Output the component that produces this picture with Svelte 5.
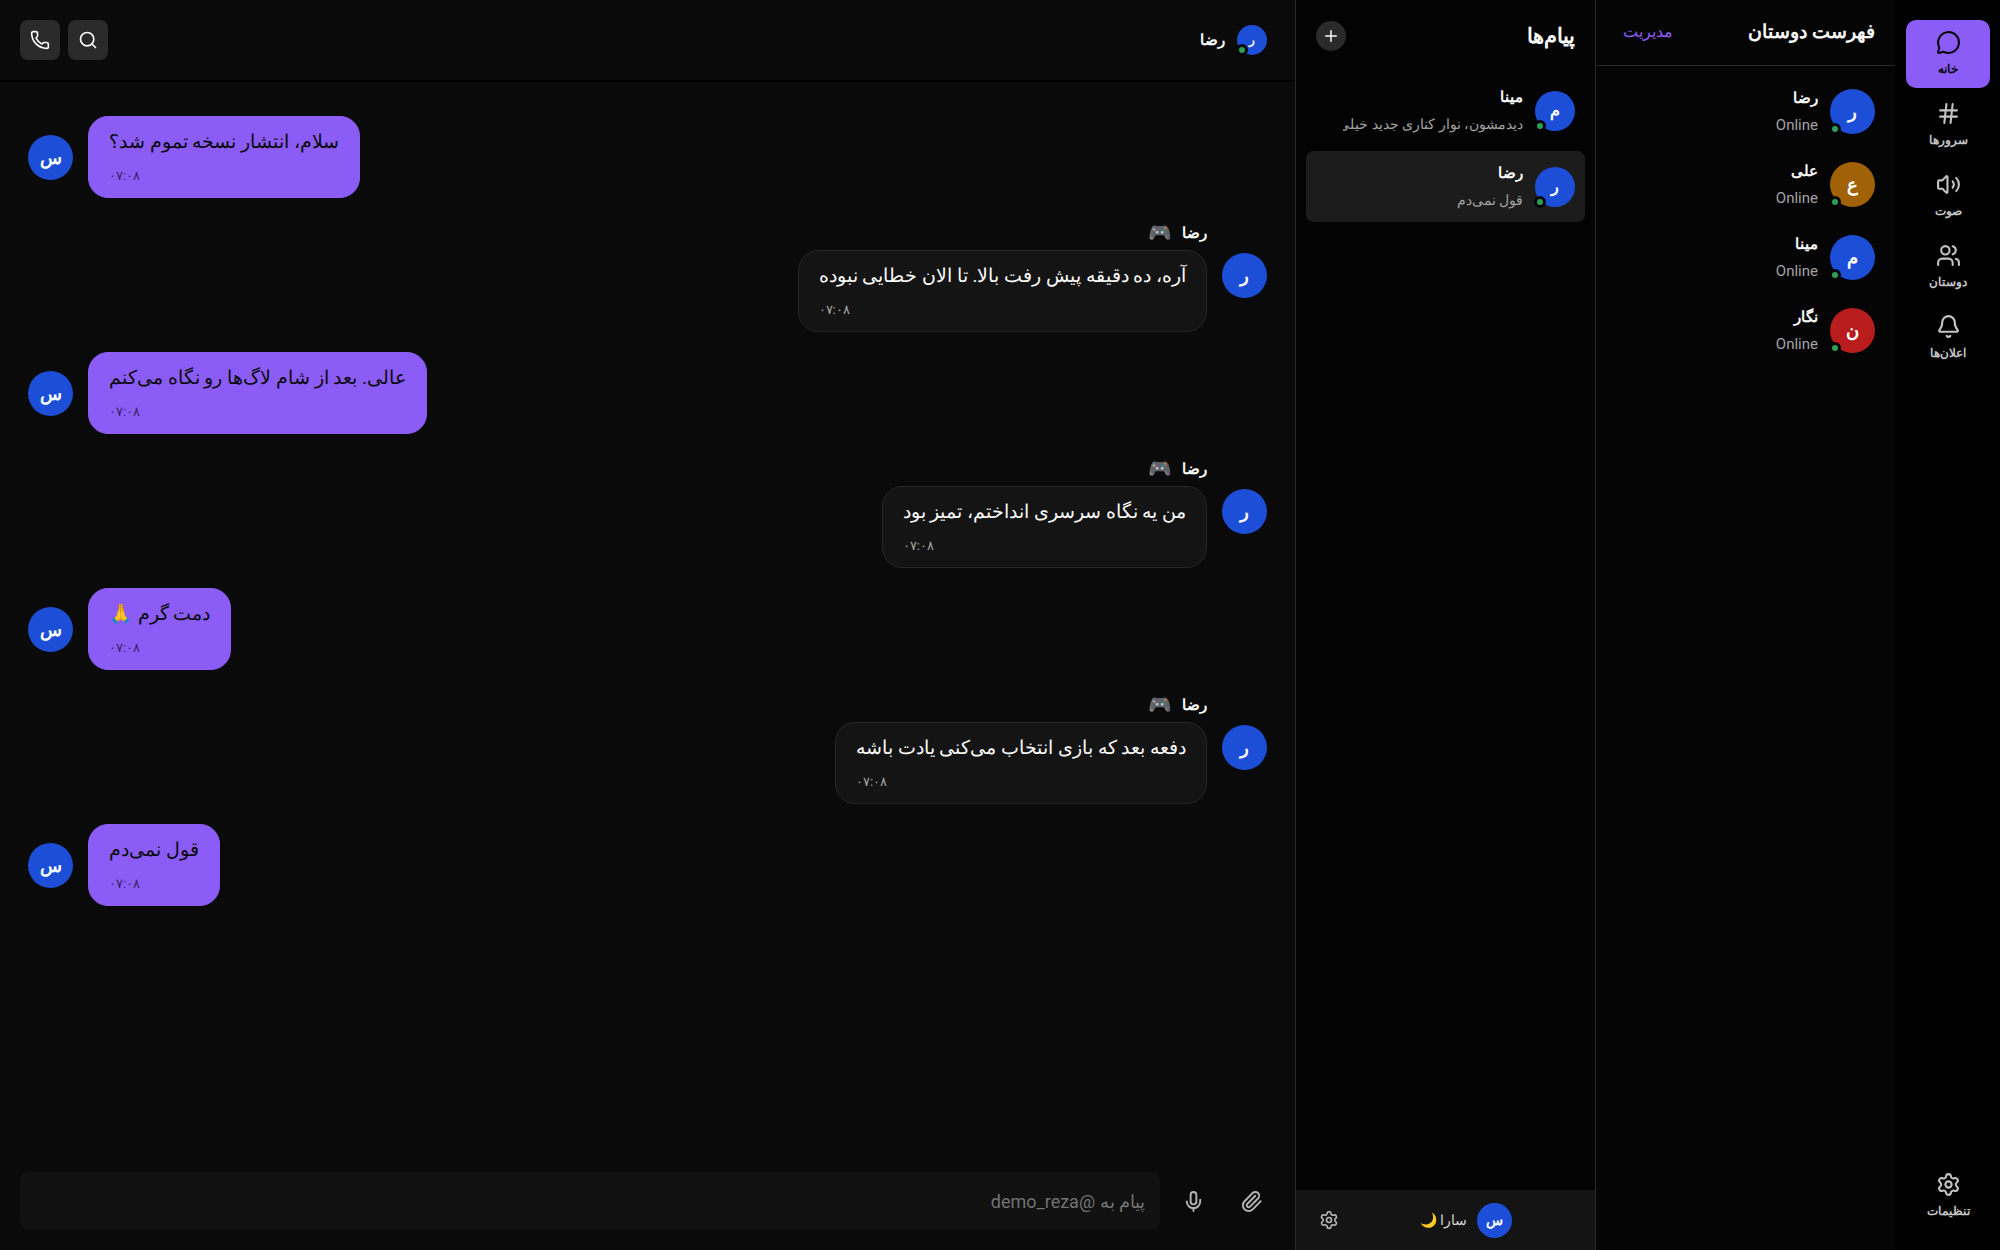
<script lang="ts">
  type Person = { name: string; letter: string; color: string };
  type Message = { text: string; mine: boolean };

  const blue = "#1d4ed8";
  const time = "۰۷:۰۸";

  const icons: Record<string, string[]> = {
    chat: [
      "M2.992 16.342a2 2 0 0 1 .094 1.167l-1.065 3.29a1 1 0 0 0 1.236 1.168l3.413-.998a2 2 0 0 1 1.099.092 10 10 0 1 0-4.777-4.719",
    ],
    hash: ["M4 9h16", "M4 15h16", "M10 3 8 21", "M16 3l-2 18"],
    volume: [
      "M11 4.702a.705.705 0 0 0-1.203-.498L6.413 7.587A1.4 1.4 0 0 1 5.416 8H3a1 1 0 0 0-1 1v6a1 1 0 0 0 1 1h2.416a1.4 1.4 0 0 1 .997.413l3.383 3.384A.705.705 0 0 0 11 19.298z",
      "M16 9a5 5 0 0 1 0 6",
      "M19.364 18.364a9 9 0 0 0 0-12.728",
    ],
    users: [
      "M16 21v-2a4 4 0 0 0-4-4H6a4 4 0 0 0-4 4v2",
      "M5 7a4 4 0 1 0 8 0a4 4 0 1 0-8 0",
      "M16 3.128a4 4 0 0 1 0 7.744",
      "M22 21v-2a4 4 0 0 0-3-3.87",
    ],
    bell: [
      "M10.268 21a2 2 0 0 0 3.464 0",
      "M3.262 15.326A1 1 0 0 0 4 17h16a1 1 0 0 0 .74-1.673C19.41 13.956 18 12.499 18 8A6 6 0 0 0 6 8c0 4.499-1.411 5.956-2.738 7.326",
    ],
    settings: [
      "M9.671 4.136a2.34 2.34 0 0 1 4.659 0 2.34 2.34 0 0 0 3.319 1.915 2.34 2.34 0 0 1 2.33 4.033 2.34 2.34 0 0 0 0 3.831 2.34 2.34 0 0 1-2.33 4.033 2.34 2.34 0 0 0-3.319 1.915 2.34 2.34 0 0 1-4.659 0 2.34 2.34 0 0 0-3.32-1.915 2.34 2.34 0 0 1-2.33-4.033 2.34 2.34 0 0 0 0-3.831A2.34 2.34 0 0 1 6.35 6.051a2.34 2.34 0 0 0 3.319-1.915",
      "M9 12a3 3 0 1 0 6 0a3 3 0 1 0-6 0",
    ],
    phone: [
      "M13.832 16.568a1 1 0 0 0 1.213-.303l.355-.465A2 2 0 0 1 17 15h3a2 2 0 0 1 2 2v3a2 2 0 0 1-2 2A18 18 0 0 1 2 4a2 2 0 0 1 2-2h3a2 2 0 0 1 2 2v3a2 2 0 0 1-.8 1.6l-.468.351a1 1 0 0 0-.292 1.233 14 14 0 0 0 6.392 6.384",
    ],
    search: ["M3 11a8 8 0 1 0 16 0a8 8 0 1 0-16 0", "m21 21-4.34-4.34"],
    plus: ["M5 12h14", "M12 5v14"],
    mic: [
      "M12 19v3",
      "M19 10v2a7 7 0 0 1-14 0",
      "M12 2a3 3 0 0 1 3 3v7a3 3 0 0 1-6 0V5a3 3 0 0 1 3-3z",
    ],
    clip: [
      "m16 6-8.414 8.586a2 2 0 0 0 2.829 2.829l8.414-8.586a4 4 0 1 0-5.657-5.657l-8.379 8.551a6 6 0 1 0 8.485 8.485l8.379-8.551",
    ],
  };

  const nav = [
    { icon: "chat", label: "خانه" },
    { icon: "hash", label: "سرورها" },
    { icon: "volume", label: "صوت" },
    { icon: "users", label: "دوستان" },
    { icon: "bell", label: "اعلان‌ها" },
  ];

  const reza: Person = { name: "رضا", letter: "ر", color: blue };
  const mina: Person = { name: "مینا", letter: "م", color: blue };
  const sara: Person = { name: "سارا", letter: "س", color: blue };

  const friends: Person[] = [
    reza,
    { name: "علی", letter: "ع", color: "#a16207" },
    mina,
    { name: "نگار", letter: "ن", color: "#b91c1c" },
  ];

  const chats = [
    { person: mina, preview: "دیدمشون، نوار کناری جدید خیلی" },
    { person: reza, preview: "قول نمی‌دم" },
  ];

  const messages: Message[] = [
    { text: "سلام، انتشار نسخه تموم شد؟", mine: true },
    { text: "آره، ده دقیقه پیش رفت بالا. تا الان خطایی نبوده", mine: false },
    { text: "عالی. بعد از شام لاگ‌ها رو نگاه می‌کنم", mine: true },
    { text: "من یه نگاه سرسری انداختم، تمیز بود", mine: false },
    { text: "دمت گرم 🙏", mine: true },
    { text: "دفعه بعد که بازی انتخاب می‌کنی یادت باشه", mine: false },
    { text: "قول نمی‌دم", mine: true },
  ];

  let page = $state("chat");
  let active = $state("رضا");
  let draft = $state("");
</script>

{#snippet icon(name: string, size: number)}
  <svg
    width={size}
    height={size}
    viewBox="0 0 24 24"
    fill="none"
    stroke="currentColor"
    stroke-width="2"
    stroke-linecap="round"
    stroke-linejoin="round"
    aria-hidden="true"
  >
    {#each icons[name] as d}
      <path {d} />
    {/each}
  </svg>
{/snippet}

{#snippet avatar(person: Person, size: string, online: boolean)}
  <span class="avatar {size}" style="background-color: {person.color}">
    {person.letter}
    {#if online}
      <span class="dot"></span>
    {/if}
  </span>
{/snippet}

<div class="app" dir="rtl" lang="fa">
  <nav class="rail">
    {#each nav as item}
      <button
        class="nav-item"
        class:selected={page === item.icon}
        onclick={() => (page = item.icon)}
      >
        {@render icon(item.icon, 25)}
        <span>{item.label}</span>
      </button>
    {/each}
    <button class="nav-item last">
      {@render icon("settings", 25)}
      <span>تنظیمات</span>
    </button>
  </nav>

  <aside class="friends">
    <header>
      <h2>فهرست دوستان</h2>
      <a href="#manage">مدیریت</a>
    </header>
    <ul>
      {#each friends as friend}
        <li>
          {@render avatar(friend, "large", true)}
          <div class="lines">
            <strong>{friend.name}</strong>
            <span>Online</span>
          </div>
        </li>
      {/each}
    </ul>
  </aside>

  <aside class="chats">
    <header>
      <h2>پیام‌ها</h2>
      <button class="add" aria-label="پیام جدید">{@render icon("plus", 18)}</button>
    </header>
    <div class="chat-list">
      {#each chats as chat}
        <button
          class="chat"
          class:selected={active === chat.person.name}
          onclick={() => (active = chat.person.name)}
        >
          {@render avatar(chat.person, "medium", true)}
          <span class="lines">
            <strong>{chat.person.name}</strong>
            <span class="preview">{chat.preview}</span>
          </span>
        </button>
      {/each}
    </div>
    <footer>
      {@render avatar(sara, "small", false)}
      <span class="me">سارا 🌙</span>
      <button class="plain" aria-label="تنظیمات">{@render icon("settings", 20)}</button>
    </footer>
  </aside>

  <main>
    <header>
      {@render avatar(reza, "tiny", true)}
      <h1>رضا</h1>
      <div class="actions">
        <button aria-label="جستجو">{@render icon("search", 20)}</button>
        <button aria-label="تماس">{@render icon("phone", 20)}</button>
      </div>
    </header>

    <div class="messages">
      {#each messages as message}
        <div class="message" class:mine={message.mine}>
          {@render avatar(message.mine ? sara : reza, "large", false)}
          <div class="body">
            {#if !message.mine}
              <div class="author"><strong>رضا</strong><span>🎮</span></div>
            {/if}
            <div class="bubble">
              <p>{message.text}</p>
              <time>{time}</time>
            </div>
          </div>
        </div>
      {/each}
    </div>

    <form class="composer" onsubmit={(e) => e.preventDefault()}>
      <div class="tools">
        <button type="button" class="plain" aria-label="پیوست">{@render icon("clip", 23)}</button>
        <button type="button" class="plain" aria-label="ضبط صدا">{@render icon("mic", 23)}</button>
      </div>
      <input
        type="text"
        bind:value={draft}
        placeholder="پیام به @demo_reza"
        aria-label="متن پیام"
      />
    </form>
  </main>
</div>

<style>
  :global(body) {
    background-color: #000;
  }
  .app {
    display: grid;
    grid-template-columns: 105px 300px 300px minmax(0, 1fr);
    height: 100vh;
    background-color: #0a0a0a;
    color: #fafafa;
    font-family: Roboto, "Noto Sans", sans-serif;
    font-size: 16px;
  }
  .app * {
    box-sizing: border-box;
  }
  h1,
  h2,
  p,
  ul {
    margin: 0;
    padding: 0;
  }
  button,
  input {
    font-family: inherit;
    border: none;
    padding: 0;
    color: inherit;
    background: none;
  }
  button {
    cursor: pointer;
  }
  svg {
    display: block;
    flex: none;
  }

  .rail {
    display: flex;
    flex-direction: column;
    gap: 3px;
    padding: 20px 10px 20px 11px;
    background-color: #000;
  }
  .nav-item {
    display: flex;
    flex-direction: column;
    align-items: center;
    gap: 4px;
    height: 68px;
    padding-top: 10px;
    border-radius: 10px;
    color: #c4c4c4;
    font-size: 12px;
    font-weight: 600;
    line-height: 20px;
  }
  .nav-item.selected {
    background-color: #8b5cf6;
    color: #0a0a0a;
  }
  .nav-item.last {
    margin-top: auto;
  }

  .friends,
  .chats {
    display: flex;
    flex-direction: column;
    min-width: 0;
    background-color: #050505;
    border-left: 1px solid #2a2a2a;
  }
  .chats {
    background-color: #030303;
  }
  h2 {
    font-size: 19px;
    font-weight: 700;
    line-height: 30px;
  }
  .friends header {
    display: flex;
    align-items: center;
    justify-content: space-between;
    height: 66px;
    padding: 0 20px 2px 27px;
    border-bottom: 1px solid #2a2a2a;
  }
  .friends header a {
    color: #8b5cf6;
    font-size: 16px;
    text-decoration: none;
  }
  .friends ul {
    list-style: none;
    padding: 9px 20px;
  }
  .friends li {
    display: flex;
    align-items: center;
    gap: 12px;
    height: 73px;
  }

  .avatar {
    position: relative;
    display: flex;
    flex: none;
    align-items: center;
    justify-content: center;
    border-radius: 50%;
    color: #fff;
    font-weight: 700;
  }
  .avatar.large {
    width: 45px;
    height: 45px;
    font-size: 18px;
  }
  .avatar.medium {
    width: 40px;
    height: 40px;
    font-size: 16px;
  }
  .avatar.small {
    width: 35px;
    height: 35px;
    font-size: 14px;
  }
  .avatar.tiny {
    width: 30px;
    height: 30px;
    font-size: 12px;
  }
  .dot {
    position: absolute;
    left: -1px;
    bottom: -1px;
    width: 12px;
    height: 12px;
    border: 3px solid #050505;
    border-radius: 50%;
    background-color: #2e9e5b;
  }

  .lines {
    display: flex;
    flex: 1;
    flex-direction: column;
    align-items: flex-start;
    min-width: 0;
  }
  .lines strong {
    font-size: 15px;
    font-weight: 700;
    line-height: 27px;
  }
  .lines span {
    color: #a3a3a3;
    font-size: 15px;
    line-height: 27px;
  }

  .chats header {
    display: flex;
    align-items: center;
    justify-content: space-between;
    height: 72px;
    padding: 0 20px;
  }
  .chats h2 {
    font-size: 21px;
  }
  .add {
    display: flex;
    align-items: center;
    justify-content: center;
    width: 30px;
    height: 30px;
    border-radius: 50%;
    background-color: #2a2a2a;
  }
  .chat-list {
    display: flex;
    flex: 1;
    flex-direction: column;
    gap: 5px;
    padding: 3px 10px;
  }
  .chat {
    display: flex;
    align-items: center;
    gap: 12px;
    height: 71px;
    padding: 0 10px;
    border-radius: 8px;
  }
  .chat.selected {
    background-color: #1c1c1c;
  }
  .lines .preview {
    max-width: 180px;
    overflow: hidden;
    font-size: 14px;
    white-space: nowrap;
  }
  .chats footer {
    display: flex;
    align-items: center;
    gap: 10px;
    height: 60px;
    padding: 0 83px 0 23px;
    background-color: #141414;
  }
  .me {
    color: #d4d4d4;
    font-size: 14px;
    font-weight: 500;
  }
  .plain {
    color: #b4b4b4;
  }
  footer .plain {
    margin-right: auto;
  }

  main {
    display: flex;
    flex-direction: column;
    min-width: 0;
  }
  main header {
    display: flex;
    align-items: center;
    gap: 12px;
    height: 82px;
    padding: 0 28px 0 20px;
    border-bottom: 2px solid #000;
  }
  h1 {
    font-size: 15px;
    font-weight: 700;
  }
  .actions {
    display: flex;
    gap: 8px;
    margin-right: auto;
  }
  .actions button {
    display: flex;
    align-items: center;
    justify-content: center;
    width: 40px;
    height: 40px;
    border-radius: 8px;
    background-color: #2a2a2a;
  }

  .messages {
    display: flex;
    flex: 1;
    flex-direction: column;
    gap: 20px;
    min-height: 0;
    padding: 34px 28px 20px;
    overflow: hidden;
  }
  .message {
    display: flex;
    align-items: center;
    gap: 15px;
  }
  .message.mine {
    flex-direction: row-reverse;
  }
  .author {
    display: flex;
    align-items: center;
    gap: 10px;
    height: 32px;
    padding-bottom: 3px;
    font-size: 15px;
  }
  .author span {
    font-size: 19px;
  }
  .bubble {
    height: 82px;
    padding: 9px 20px;
    border: 1px solid #262626;
    border-radius: 20px;
    background-color: #141414;
  }
  .bubble p {
    font-size: 19px;
    line-height: 32px;
  }
  .bubble time {
    display: block;
    color: #a3a3a3;
    font-size: 13px;
    line-height: 36px;
    text-align: left;
  }
  .mine .bubble {
    border-color: #8b5cf6;
    background-color: #8b5cf6;
    color: #0a0a0a;
  }
  .mine time {
    color: #3a2568;
  }

  .composer {
    display: flex;
    align-items: center;
    gap: 22px;
    padding: 20px 32px 20px 20px;
  }
  .tools {
    display: flex;
    gap: 35px;
  }
  .composer input {
    flex: 1;
    min-width: 0;
    height: 58px;
    padding: 0 15px;
    border-radius: 8px;
    background-color: #111;
    font-size: 18px;
    outline: none;
  }
  .composer input::placeholder {
    color: #737373;
    opacity: 1;
  }
</style>
